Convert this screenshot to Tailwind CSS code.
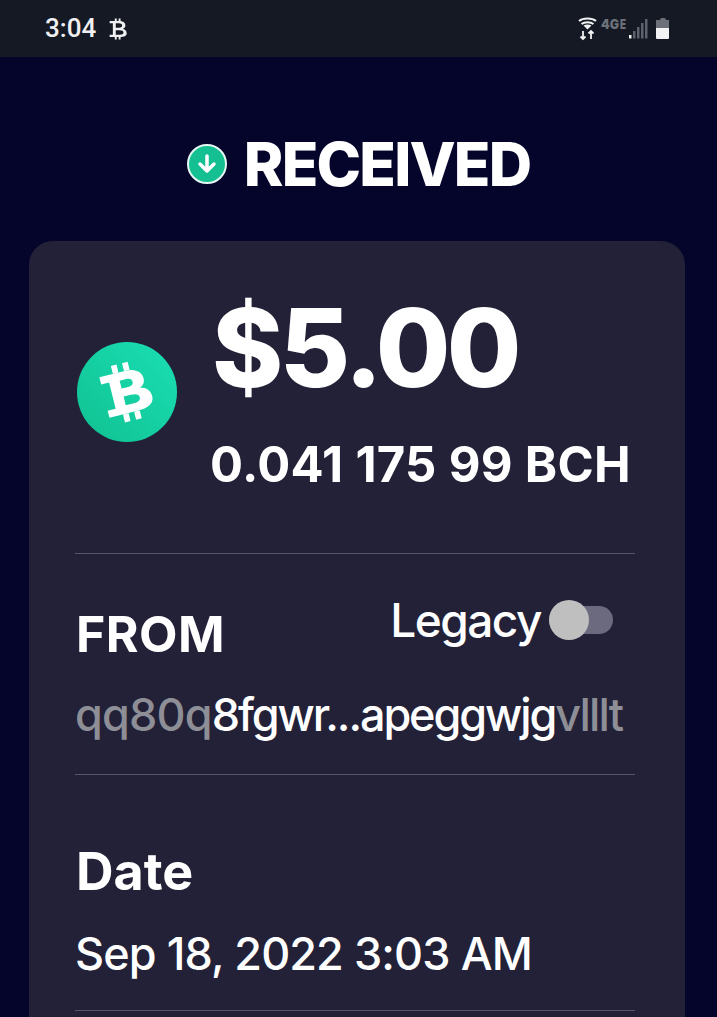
<!DOCTYPE html>
<html lang="en">
<head>
  <meta charset="UTF-8">
  <meta name="viewport" content="width=device-width, initial-scale=1">
  <title>Received</title>
  <script src="https://cdn.jsdelivr.net/npm/@tailwindcss/browser@4"></script>
</head>
<body class="bg-[#05052b] text-white font-['Inter',sans-serif] h-[1017px] overflow-hidden">

  <!-- Status bar -->
  <div class="h-[57px] bg-[#141923] flex items-center justify-between pl-[45px] pr-[48px]">
    <div class="flex items-center gap-[13px]">
      <span class="text-[26px] font-medium text-[#f0f0f2] font-['Roboto',sans-serif]">3:04</span>
      <svg width="18" height="24" viewBox="-26 -34 56 68" fill="#f0f0f2">
        <path fill-rule="evenodd" d="M-24,-25H6C20,-25 25,-18 25,-11C25,-5 21,-2 17,-1C25,1 29,6 29,13C29,21 22,25 8,25H-24V18H-14V-18H-24ZM-5,-18V-4H5C12,-4 15,-7 15,-11C15,-15 12,-18 5,-18ZM-5,4V18H7C15,18 19,16 19,11C19,6 15,4 7,4Z"/>
        <path d="M-8,-33H-2V-25H-8ZM4,-33H10V-25H4ZM-8,25H-2V33H-8ZM4,25H10V33H4Z"/>
      </svg>
    </div>
    <div class="flex items-center">
      <svg width="88" height="32" viewBox="0 0 88 32">
        <g fill="none" stroke="#f2f2f4" stroke-width="2">
          <path d="M19,8C23,4.500 32,4.500 36,8"/>
          <path d="M21.500,11C24.500,8.500 30.500,8.500 33.500,11"/>
        </g>
        <path d="M27.500,16.500L23.500,12.500C26,11 29,11 31.500,12.500Z" fill="#f2f2f4"/>
        <g fill="none" stroke="#f2f2f4" stroke-width="1.800">
          <path d="M23,18V26M20.500,23.500L23,26L25.500,23.500"/>
          <path d="M31,18V26M28.500,20.500L31,18L33.500,20.500"/>
        </g>
        <text x="41" y="16" font-size="13" font-weight="900" fill="#6d7079" font-family="Inter" textLength="18" lengthAdjust="spacingAndGlyphs">4G</text>
        <text x="60" y="16" font-size="13" font-weight="900" fill="#6d7079" font-family="Inter" textLength="6" lengthAdjust="spacingAndGlyphs">E</text>
        <g fill="#5f626c">
          <rect x="69" y="22" width="2.500" height="3.500" fill="#f2f2f4"/>
          <rect x="73" y="18" width="2.500" height="7.500"/>
          <rect x="77" y="14" width="2.500" height="11.500"/>
          <rect x="81" y="10" width="2.500" height="15.500"/>
          <rect x="85" y="6" width="2.500" height="19.500"/>
        </g>
      </svg>
      <div class="ml-[8px] w-[13px] h-[21px] flex flex-col items-center">
        <div class="w-[6px] h-[2px] bg-[#6d7079] rounded-t-sm"></div>
        <div class="w-[13px] h-[8px] bg-[#6d7079]"></div>
        <div class="w-[13px] h-[11px] bg-[#f2f2f4] rounded-b-[1px]"></div>
      </div>
    </div>
  </div>

  <!-- Title -->
  <div class="h-[184px] pt-[76px] flex justify-center items-start">
    <div class="flex items-center gap-[17px] h-[62px]">
      <div class="w-[40px] h-[40px] rounded-full bg-[#14bf92] border-[2px] border-[#e4f7f1] flex items-center justify-center">
        <svg width="22" height="22" viewBox="0 0 22 22" fill="none" stroke="#fff" stroke-width="3.500" stroke-linecap="round" stroke-linejoin="round">
          <path d="M11,3V18M4,11L11,18L18,11"/>
        </svg>
      </div>
      <h1 class="text-[60px] leading-none font-extrabold tracking-[-1.800px]">RECEIVED</h1>
    </div>
  </div>

  <!-- Card -->
  <div class="ml-[29px] mr-[32px] h-[900px] bg-[#222138] rounded-[24px] pl-[46px] pr-[50px]">
    <div class="h-[313px] border-b border-[#55566a] flex items-start">
      <div class="w-[100px] h-[100px] mt-[101px] ml-[2px] rounded-full bg-linear-to-bl from-[#1ae0b4] to-[#10c091] flex items-center justify-center shrink-0">
        <svg width="72" height="76" viewBox="-34 -38 72 76" fill="#fff">
          <g transform="rotate(-14) scale(0.82)">
            <path fill-rule="evenodd" d="M-26,-25H6C20,-25 26,-18 26,-11C26,-5 23,-2 19,-1C27,1 31,6 31,13C31,21 24,26 8,26H-26V17H-16V-16H-26ZM-3,-15V-5H4C10,-5 12,-7 12,-10C12,-13 10,-15 4,-15ZM-3,5V16H6C13,16 16,14 16,10.500C16,7 13,5 6,5Z"/>
            <path d="M-9,-35H-2V-25H-9ZM5,-35H12V-25H5ZM-9,26H-2V36H-9ZM5,26H12V36H5Z"/>
          </g>
        </svg>
      </div>
      <div class="ml-[35px] pt-[42px]">
        <div class="text-[108px] leading-[130px] font-extrabold tracking-[-3.500px]">$5.00</div>
        <div class="text-[49px] leading-[58px] font-bold tracking-[0.300px] mt-[23px] ml-[-2px] whitespace-nowrap">0.041 175 99 BCH</div>
      </div>
    </div>

    <div class="h-[221px] border-b border-[#55566a]">
      <div class="flex justify-between items-start h-[133px]">
        <div class="text-[50px] font-bold leading-[58px] tracking-[0.400px] mt-[51px] ml-[1px]">FROM</div>
        <div class="flex items-center mt-[38px] mr-[22px]">
          <span class="text-[46px] leading-[56px] font-medium tracking-[-1.500px]">Legacy</span>
          <div class="relative w-[64px] h-[28px] ml-[8px] rounded-full bg-[#6b6a7e]">
            <div class="absolute left-0 top-[-6px] w-[40px] h-[40px] rounded-full bg-[#bfbfbf]"></div>
          </div>
        </div>
      </div>
      <div class="text-[45px] leading-[56px] tracking-[-2.100px] font-medium whitespace-nowrap">
        <span class="text-[#8e8e96] tracking-[-0.800px]">qq80q</span>8fgwr...apeggwjg<span class="text-[#8e8e96] tracking-[-1.800px]">vlllt</span>
      </div>
    </div>

    <div class="h-[236px] border-b border-[#55566a]">
      <div class="text-[52px] font-bold leading-[58px] pt-[68px] ml-[1px] h-[126px]">Date</div>
      <div class="text-[45px] leading-[56px] tracking-[-0.900px] font-medium whitespace-nowrap mt-[25px]">Sep 18, 2022 3:03 AM</div>
    </div>
  </div>

</body>
</html>
